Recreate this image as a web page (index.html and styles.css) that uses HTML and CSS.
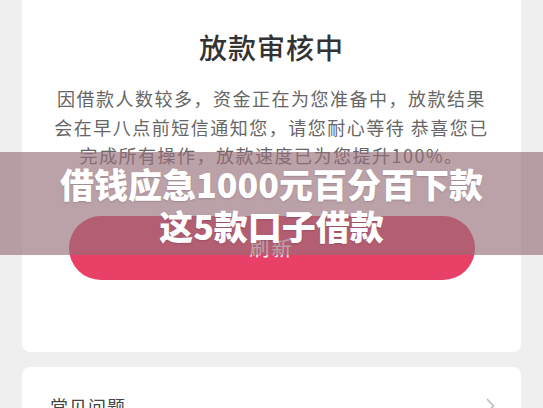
FILE: index.html
```html
<!DOCTYPE html>
<html lang="zh-CN">
<head>
<meta charset="UTF-8">
<meta name="viewport" content="width=device-width, initial-scale=1.0">
<title>放款审核中</title>
<link rel="stylesheet" href="styles.css">
</head>
<body>
  <div class="page">
    <div class="card status-card">
      <div class="status-icon"></div>
      <h1 class="status-title">放款审核中</h1>
      <p class="status-desc">因借款人数较多，资金正在为您准备中，放款结果会在早八点前短信通知您，请您耐心等待 恭喜您已完成所有操作，放款速度已为您提升100%。</p>
      <button class="refresh-btn">刷新</button>
    </div>

    <div class="card faq-card">
      <div class="faq-row">
        <span class="faq-label">常见问题</span>
        <svg class="chevron" width="9" height="16" viewBox="0 0 9 16">
          <path d="M1.5 1.5 L7.5 8 L1.5 14.5" fill="none" stroke="#bbb" stroke-width="1.6" stroke-linecap="round" stroke-linejoin="round"/>
        </svg>
      </div>
    </div>
  </div>

  <div class="banner">
    <div class="banner-line">借钱应急1000元百分百下款</div>
    <div class="banner-line">这5款口子借款</div>
  </div>
</body>
</html>
```

FILE: styles.css
```css
body {
  font-family: "Noto Sans CJK SC", "Noto Sans", sans-serif;
  background-color: #efefef;
  margin: 0;
  overflow: hidden;
}
.page {
  padding: 0 22px;
}
.card {
  background-color: #fff;
  border-radius: 8px;
}
.status-card {
  margin-top: -72px;
  padding: 12px 28px 72px;
  text-align: center;
}
.status-icon {
  width: 60px;
  height: 60px;
  margin: 0 auto;
  border-radius: 50%;
  background-color: #f7f3dc;
  position: relative;
  left: 28px;
}
.status-title {
  margin: 27px 0 0;
  font-size: 28px;
  line-height: 40px;
  font-weight: 500;
  letter-spacing: 1px;
  color: #333;
}
.status-desc {
  margin: 17px 0 0;
  font-size: 18px;
  line-height: 28.5px;
  letter-spacing: 1.5px;
  color: #666;
}
.refresh-btn {
  display: block;
  width: 406px;
  height: 64px;
  margin: 46px auto 0;
  border: none;
  border-radius: 32px;
  background-color: #e94068;
  color: #fff;
  font-family: inherit;
  font-size: 20px;
  letter-spacing: 2px;
}
.faq-card {
  margin-top: 15px;
  height: 120px;
}
.faq-row {
  display: flex;
  justify-content: space-between;
  align-items: center;
  padding: 27px 26px 0 28px;
}
.faq-label {
  font-size: 18px;
  line-height: 24px;
  color: #444;
  letter-spacing: 1px;
}
.banner {
  position: absolute;
  top: 152px;
  left: 0;
  right: 0;
  height: 103px;
  padding-top: 2px;
  box-sizing: border-box;
  background-color: rgba(151, 111, 121, 0.65);
  display: flex;
  flex-direction: column;
  justify-content: center;
  align-items: center;
}
.banner-line {
  color: #fff;
  font-size: 34px;
  line-height: 42px;
  font-weight: 900;
  text-shadow: 0 1px 2px rgba(0, 0, 0, 0.15);
}
```
